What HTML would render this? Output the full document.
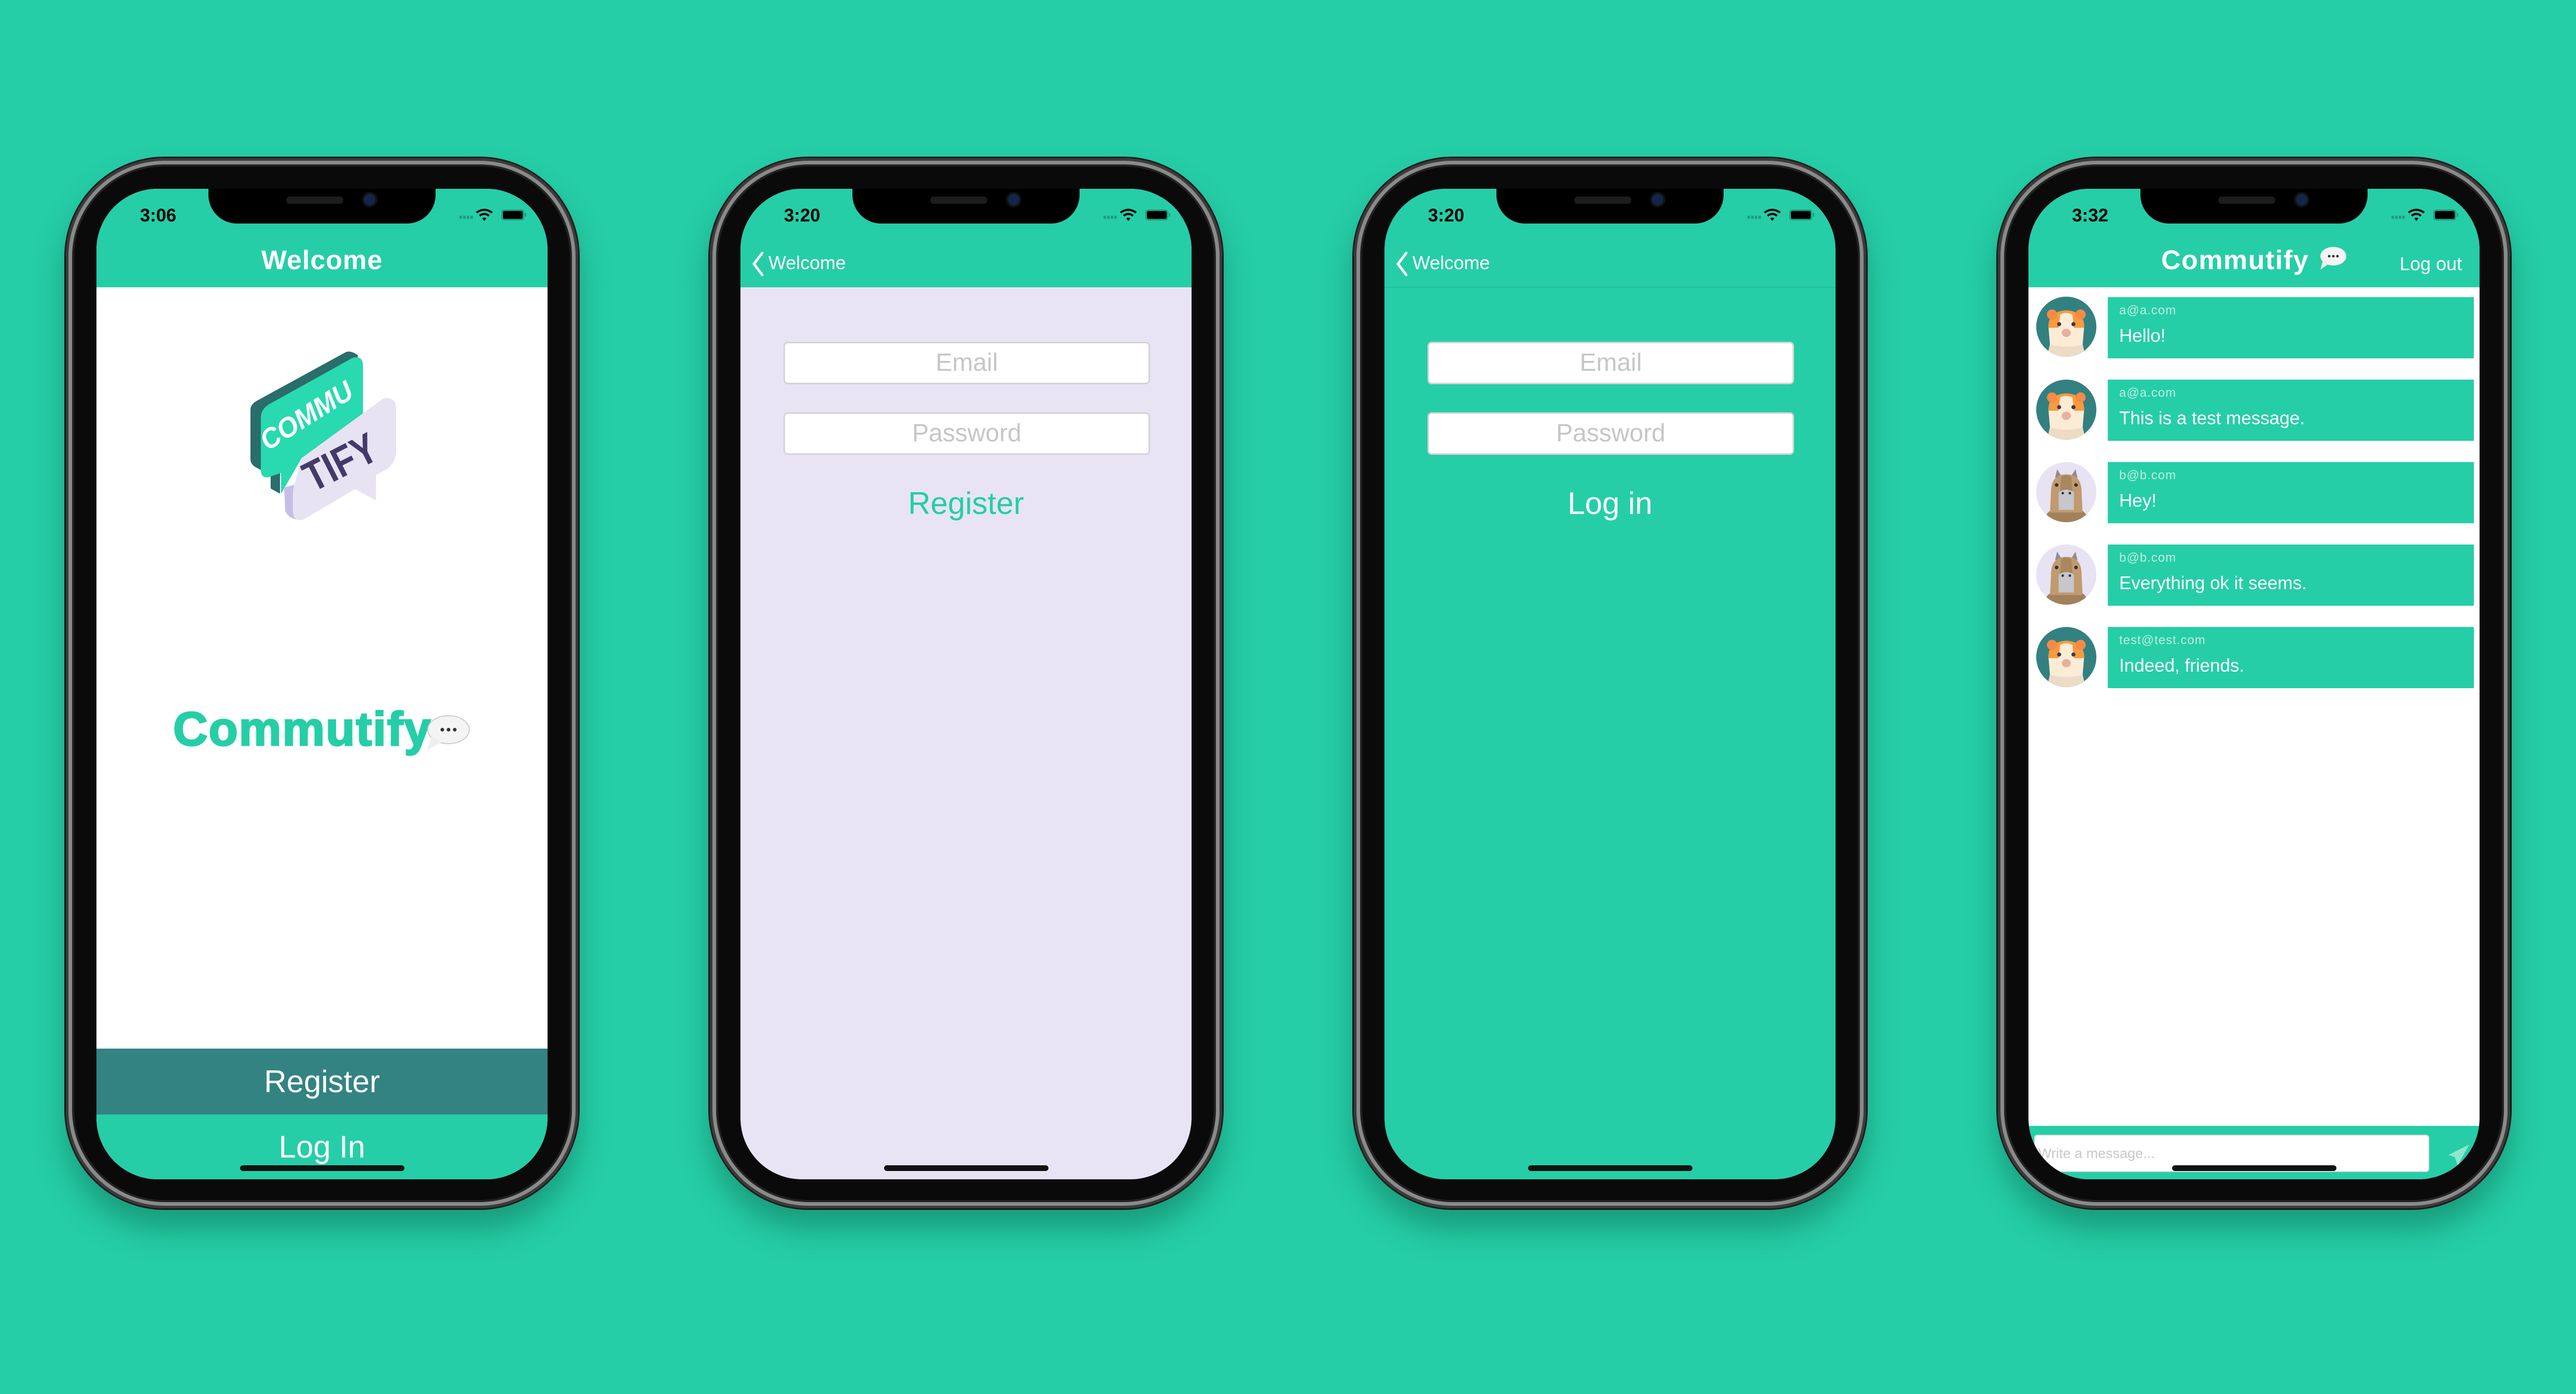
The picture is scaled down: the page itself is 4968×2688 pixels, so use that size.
<!DOCTYPE html>
<html><head><meta charset="utf-8">
<style>
*{margin:0;padding:0;box-sizing:border-box}
body{width:4968px;height:2688px;background:#25cea7;position:relative;overflow:hidden;font-family:"Liberation Sans",sans-serif}
.ph{position:absolute;top:305px;width:988px;height:2025px;border-radius:190px;background:#0a0a0a;
 box-shadow:0 0 0 3px #1a1a1a,inset 0 0 0 5px #3a3a3a,inset 0 0 0 12px #8a8a8a,inset 0 0 0 16px #222,0 40px 60px rgba(0,60,40,.35)}
.sc{position:absolute;left:59px;top:59px;width:870px;height:1910px;border-radius:118px;overflow:hidden;background:#fff}
.notch{position:absolute;left:216px;top:-40px;width:438px;height:107px;background:#000;border-radius:0 0 55px 55px;z-index:5}
.notch:before{content:"";position:absolute;left:150px;top:55px;width:110px;height:14px;border-radius:7px;background:#1d1d1d}
.notch:after{content:"";position:absolute;left:300px;top:50px;width:22px;height:22px;border-radius:50%;background:#13264a;box-shadow:0 0 0 4px #111}
.time{position:absolute;left:74px;top:32px;width:90px;text-align:center;font-size:35px;font-weight:bold;color:#000;z-index:6}
.st{position:absolute;left:700px;top:38px;z-index:6}
.nav{position:absolute;left:0;top:0;width:870px;height:190px;background:#25cea7}
.title{position:absolute;left:0;width:870px;top:108px;text-align:center;color:#fff;font-weight:900;font-size:52px;letter-spacing:1px}
.back{position:absolute;left:20px;top:118px;color:#fff;font-size:36px}
.fld{position:absolute;left:83px;width:707px;height:82px;background:#fff;border:3px solid #d4d4d4;border-radius:8px;color:#c6c6c6;font-size:48px;text-align:center;line-height:76px}
.home{position:absolute;left:277px;top:1883px;width:317px;height:11px;border-radius:6px;background:#111;z-index:6}
.msg{position:absolute;left:153px;width:706px;height:118px;background:#25cea7;color:#fff}
.msg .e{position:absolute;left:22px;top:12px;font-size:24px;color:#c2ece1;letter-spacing:1px}
.msg .t{position:absolute;left:22px;top:55px;font-size:35px}
.av{position:absolute;left:14px;width:118px;height:118px}
</style></head><body>
<svg width="0" height="0" style="position:absolute">
<defs>
<symbol id="stat" viewBox="0 0 130 26">
<rect x="0" y="14" width="5" height="6" rx="1" fill="#1f9c7e"/><rect x="7" y="14" width="5" height="6" rx="1" fill="#1f9c7e"/><rect x="14" y="14" width="5" height="6" rx="1" fill="#1f9c7e"/><rect x="21" y="14" width="5" height="6" rx="1" fill="#1f9c7e"/>
<path d="M33 8 Q48 -3 63 8" stroke="#000" stroke-width="4" fill="none"/><path d="M39 14 Q48 7 57 14" stroke="#000" stroke-width="4" fill="none"/><path d="M44 19 L48 24 L52 19 Q48 16 44 19Z" fill="#000"/>
<rect x="81" y="2" width="44" height="21" rx="5" fill="#1f9c7e"/><rect x="84" y="5" width="38" height="15" rx="3" fill="#000"/><rect x="126" y="9" width="3" height="7" rx="1" fill="#1f9c7e"/>
</symbol>
<symbol id="ham" viewBox="0 0 120 120">
<clipPath id="cc"><circle cx="60" cy="60" r="59"/></clipPath>
<circle cx="60" cy="60" r="59" fill="#328180"/>
<g clip-path="url(#cc)">
<path d="M22 120 L30 85 L90 85 L98 120Z" fill="#ecdcc5"/>
<path d="M25 60 Q25 30 60 28 Q95 30 95 60 L92 95 Q60 103 28 95Z" fill="#fcecd6"/>
<path d="M25 62 Q24 30 60 28 Q96 30 95 62 L75 62 L72 36 Q60 30 48 36 L45 62Z" fill="#fa9a3c"/>
<circle cx="32" cy="36" r="10" fill="#f78a44"/><circle cx="88" cy="36" r="10" fill="#f78a44"/>
<circle cx="46" cy="55" r="4" fill="#3b3b4a"/><circle cx="74" cy="55" r="4" fill="#3b3b4a"/>
<ellipse cx="60" cy="72" rx="9" ry="8" fill="#e6b1a0"/>
</g></symbol>
<symbol id="cap" viewBox="0 0 120 120">
<clipPath id="cc2"><circle cx="60" cy="60" r="59"/></clipPath>
<circle cx="60" cy="60" r="59" fill="#e7e3f3"/>
<g clip-path="url(#cc2)">
<path d="M15 120 Q20 95 40 92 L80 92 Q100 95 105 120Z" fill="#a1815a"/>
<path d="M38 32 L42 15 L50 28Z M82 32 L78 15 L70 28Z" fill="#8c8c95"/>
<path d="M30 60 Q30 25 60 25 Q90 25 90 60 L92 100 L28 100Z" fill="#c19a6f"/>
<path d="M50 30 Q60 24 70 30 L72 60 L48 60Z" fill="#a9875f"/>
<path d="M45 60 Q60 50 75 60 L75 95 L45 95Z" fill="#c6c6cc"/>
<circle cx="41" cy="46" r="3.5" fill="#333"/><circle cx="79" cy="46" r="3.5" fill="#333"/>
<circle cx="53" cy="62" r="2.5" fill="#333"/><circle cx="67" cy="62" r="2.5" fill="#333"/>
</g></symbol>
</defs></svg>

<!-- Phone 1 -->
<div class="ph" style="left:127px"><div class="sc">
<div class="nav"></div><div class="notch"></div>
<div class="time">3:06</div>
<svg class="st" width="130" height="26"><use href="#stat"/></svg>
<div class="title">Welcome</div>
<svg style="position:absolute;left:214px;top:276px" width="450" height="400" viewBox="0 0 450 400">
<path d="M83 150 Q83 140 95 133 L265 40 Q275 34 290 45 L295 165 L140 265 L140 312 L122 302 L122 276 L95 262 Q83 256 83 245Z" fill="#2a6d6a"/>
<path d="M103 165 Q103 150 118 140 L280 50 Q300 45 300 65 L300 160 Q300 172 288 180 L182 243 L142 312 L142 272 L118 280 Q103 283 103 265Z" fill="#29d9b0"/>
<path d="M148 300 L150 345 Q155 358 172 362 L178 292Z" fill="#c6bee6"/>
<path d="M182 243 L340 128 Q362 125 364 145 L364 230 Q364 255 340 268 L325 276 L325 325 L285 303 L185 362 Q165 367 165 345 L165 305Z" fill="#e7e3f3"/>
<text x="0" y="0" transform="translate(116 230) rotate(-32)" font-family="Liberation Sans" font-weight="bold" font-style="italic" font-size="54" fill="#fff" textLength="200" lengthAdjust="spacingAndGlyphs">COMMU</text>
<text x="0" y="0" transform="translate(203 310) rotate(-27)" font-family="Liberation Sans" font-weight="bold" font-size="82" fill="#433a6a" textLength="148" lengthAdjust="spacingAndGlyphs">TIFY</text>
</svg>
<div style="position:absolute;left:148px;top:990px;font-size:92px;font-weight:900;color:#25cea7;letter-spacing:2px;-webkit-text-stroke:3px #25cea7">Commutify</div>
<svg style="position:absolute;left:631px;top:1011px" width="90" height="82" viewBox="0 0 90 82"><ellipse cx="48" cy="32" rx="40" ry="27" fill="#f4f4f4" stroke="#ccc" stroke-width="2"/><path d="M16 44 L6 72 L34 56Z" fill="#eee"/><circle cx="36" cy="32" r="3.5" fill="#333"/><circle cx="48" cy="32" r="3.5" fill="#333"/><circle cx="60" cy="32" r="3.5" fill="#333"/></svg>
<div style="position:absolute;left:0;top:1658px;width:870px;height:127px;background:#338383;color:#fff;font-size:60px;text-align:center;line-height:127px">Register</div>
<div style="position:absolute;left:0;top:1785px;width:870px;height:130px;background:#25cea7;color:#fff;font-size:60px;text-align:center;line-height:125px">Log In</div>
<div class="home"></div>
</div></div>

<!-- Phone 2 -->
<div class="ph" style="left:1369px"><div class="sc" style="background:#e8e4f3">
<div class="nav"></div><div class="notch"></div>
<div class="time">3:20</div>
<svg class="st" width="130" height="26"><use href="#stat"/></svg>
<svg style="position:absolute;left:20px;top:120px" width="28" height="50"><path d="M22 4 L6 25 L22 46" stroke="#fff" stroke-width="5" fill="none" stroke-linecap="round"/></svg>
<div class="back" style="left:54px;top:122px">Welcome</div>
<div class="fld" style="top:295px">Email</div>
<div class="fld" style="top:431px">Password</div>
<div style="position:absolute;left:0;width:870px;top:572px;text-align:center;font-size:60px;color:#25cea7">Register</div>
<div class="home"></div>
</div></div>

<!-- Phone 3 -->
<div class="ph" style="left:2611px"><div class="sc" style="background:#25cea7">
<div class="notch"></div>
<div class="time">3:20</div>
<svg class="st" width="130" height="26"><use href="#stat"/></svg>
<div style="position:absolute;left:0;top:189px;width:870px;height:2px;background:#22bd99"></div>
<svg style="position:absolute;left:20px;top:120px" width="28" height="50"><path d="M22 4 L6 25 L22 46" stroke="#fff" stroke-width="5" fill="none" stroke-linecap="round"/></svg>
<div class="back" style="left:54px;top:122px">Welcome</div>
<div class="fld" style="top:295px">Email</div>
<div class="fld" style="top:431px">Password</div>
<div style="position:absolute;left:0;width:870px;top:572px;text-align:center;font-size:60px;color:#fff">Log in</div>
<div class="home"></div>
</div></div>

<!-- Phone 4 -->
<div class="ph" style="left:3853px"><div class="sc">
<div class="nav"></div><div class="notch"></div>
<div class="time">3:32</div>
<svg class="st" width="130" height="26"><use href="#stat"/></svg>
<div style="position:absolute;left:256px;top:108px;font-size:52px;font-weight:900;color:#fff;letter-spacing:1.5px">Commutify</div>
<svg style="position:absolute;left:558px;top:110px" width="56" height="52" viewBox="0 0 56 52"><ellipse cx="30" cy="20" rx="25" ry="18" fill="#f4f4f4"/><path d="M10 28 L5 46 L22 34Z" fill="#eee"/><circle cx="22" cy="20" r="2.5" fill="#333"/><circle cx="30" cy="20" r="2.5" fill="#333"/><circle cx="38" cy="20" r="2.5" fill="#333"/></svg>
<div style="position:absolute;right:34px;top:124px;font-size:36px;color:#fff">Log out</div>

<svg class="av" style="top:207px"><use href="#ham"/></svg>
<div class="msg" style="top:209px"><div class="e">a@a.com</div><div class="t">Hello!</div></div>
<svg class="av" style="top:367px"><use href="#ham"/></svg>
<div class="msg" style="top:368px"><div class="e">a@a.com</div><div class="t">This is a test message.</div></div>
<svg class="av" style="top:526px"><use href="#cap"/></svg>
<div class="msg" style="top:527px"><div class="e">b@b.com</div><div class="t">Hey!</div></div>
<svg class="av" style="top:685px"><use href="#cap"/></svg>
<div class="msg" style="top:686px"><div class="e">b@b.com</div><div class="t">Everything ok it seems.</div></div>
<svg class="av" style="top:844px"><use href="#ham"/></svg>
<div class="msg" style="top:845px"><div class="e">test@test.com</div><div class="t">Indeed, friends.</div></div>

<div style="position:absolute;left:0;top:1807px;width:870px;height:110px;background:#25cea7"></div>
<div style="position:absolute;left:11px;top:1824px;width:762px;height:72px;background:#fff;border:2px solid #ddd;border-radius:6px;color:#c8c8c8;font-size:27px;line-height:68px;padding-left:6px">Write a message...</div>
<svg style="position:absolute;left:808px;top:1841px" width="46" height="44" viewBox="0 0 46 44"><path d="M42 2 L2 22 L14 26 L20 42Z" fill="#8fe6cf"/></svg>
<div class="home"></div>
</div></div>
</body></html>
